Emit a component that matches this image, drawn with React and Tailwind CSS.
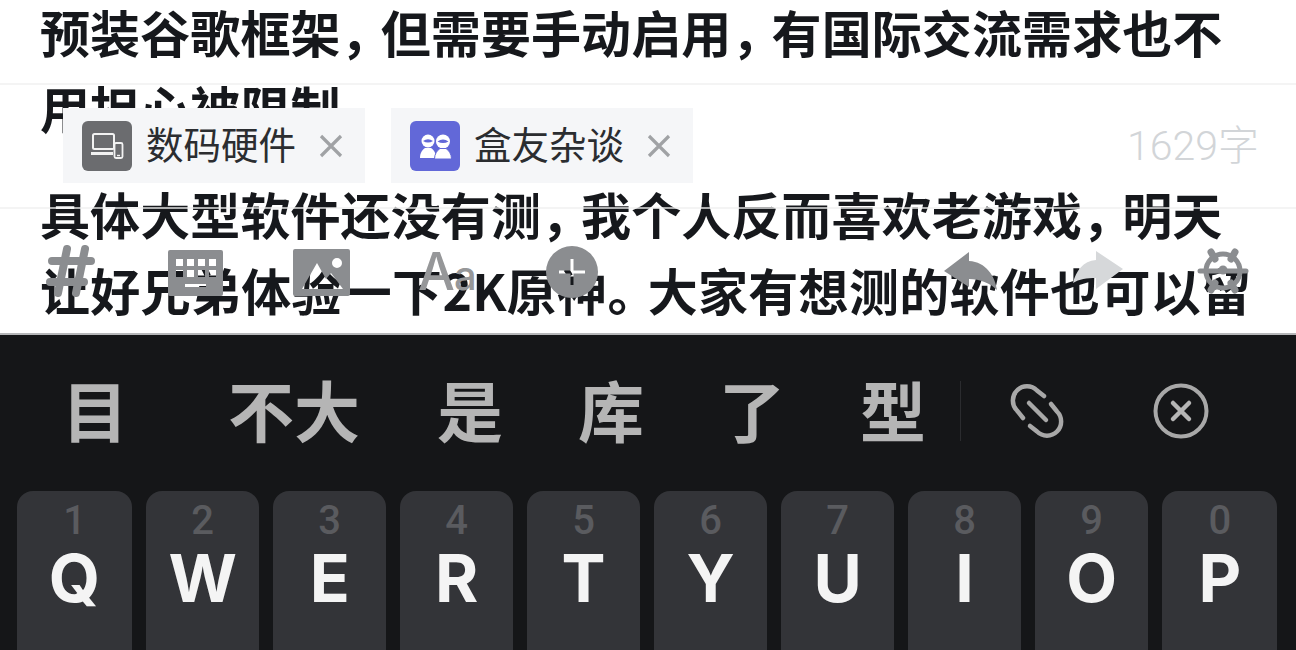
const cjk = { fontFamily: '"Noto Sans CJK SC", sans-serif' };
const latin = { fontFamily: 'Inter, "Noto Sans CJK SC", sans-serif' };
const roboto = { fontFamily: 'Roboto, "Noto Sans CJK SC", sans-serif' };

function Punct({ c, cut }) {
  return <span style={{ marginRight: -cut }}>{c}</span>;
}

function Line({ children, className = 'tracking-[0.1px]' }) {
  return (
    <div className={`h-[76px] leading-[76px] whitespace-nowrap text-[50px] font-bold text-[#16181c] ${className}`}>
      {children}
    </div>
  );
}

function DeviceIcon() {
  return (
    <svg viewBox="0 0 50 50" className="w-[50px] h-[50px]">
      <rect x="11" y="13" width="21" height="15" rx="1.5" fill="none" stroke="#f2f2f2" strokeWidth="2" />
      <path d="M9 31h22v3H9z" fill="#f2f2f2" />
      <rect x="32.5" y="22" width="8" height="15" rx="1.5" fill="#6b6c6f" stroke="#f2f2f2" strokeWidth="1.8" />
      <path d="M35 34.5h3" stroke="#f2f2f2" strokeWidth="1.4" />
    </svg>
  );
}

function FriendsIcon() {
  return (
    <svg viewBox="0 0 50 50" className="w-[50px] h-[50px]">
      <circle cx="18" cy="20" r="6.5" fill="#fff" />
      <path d="M10 37c0-5 2-8 5-10h6c3 2 5 5 5 10z" fill="#fff" />
      <circle cx="33" cy="20.5" r="7" fill="#fff" />
      <path d="M24.5 38c0-5 2.5-8.5 5.5-10.500h6c3 2 5.500 5.500 5.500 10.500z" fill="#fff" stroke="#6268d8" strokeWidth="1" />
      <path d="M13 20q5-3.500 10 0q-5 3-10 0z M27.500 20.500q5.500-3.800 11 0q-5.500 3-11 0z" fill="#6268d8" />
    </svg>
  );
}

function Close() {
  return (
    <svg viewBox="0 0 24 24" className="w-[24px] h-[24px]">
      <path d="M2 2l20 20M22 2L2 22" stroke="#a0a2a5" strokeWidth="3.2" />
    </svg>
  );
}

function Tag({ icon, label, bg }) {
  return (
    <div className="w-[302px] h-[75px] bg-[#f5f6f8] flex items-center pl-[19px]">
      <div className={`w-[50px] h-[50px] rounded-[6px] ${bg}`}>{icon}</div>
      <span className="ml-[14px] -mt-[5px] w-[149px] text-[37.5px] leading-[50px] text-[#2b2d30] whitespace-nowrap">{label}</span>
      <span className="ml-[24px]"><Close /></span>
    </div>
  );
}

const GRAY = '#8b8d90';

function keyboardPath() {
  let d = 'M2 0H53a2 2 0 0 1 2 2V44a2 2 0 0 1-2 2H2a2 2 0 0 1-2-2V2a2 2 0 0 1 2-2z';
  [9, 20].forEach((y) => {
    [8, 19, 30, 41].forEach((x) => {
      d += `M${x} ${y}h7v7h-7z`;
    });
  });
  d += 'M17 34h21v3H17z';
  return d;
}

function Toolbar() {
  return (
    <div className="absolute left-[46px] top-[244px] w-[1210px] h-[54px] flex items-center">
      <svg viewBox="0 0 50 54" className="w-[50px] h-[54px]">
        <path d="M21 5L12 49M39 5L30 49M6 17H45M4 38H38" stroke={GRAY} strokeWidth="8" strokeLinecap="round" fill="none" />
      </svg>
      <svg viewBox="0 0 55 46" className="ml-[72px] mt-[4px] w-[55px] h-[46px]">
        <path fillRule="evenodd" d={keyboardPath()} fill={GRAY} />
      </svg>
      <svg viewBox="0 0 57 47" className="ml-[70px] mt-[2px] w-[57px] h-[47px]">
        <path
          fillRule="evenodd"
          fill={GRAY}
          d="M2 0H55a2 2 0 0 1 2 2V45a2 2 0 0 1-2 2H2a2 2 0 0 1-2-2V2a2 2 0 0 1 2-2z M39 14a5 5 0 1 0 10 0a5 5 0 1 0-10 0z M9 40L24 14L33 30L38 24L50 40z"
        />
      </svg>
      <span className="ml-[68px] mt-[1px] w-[62px] tracking-[-1px] text-[#969799] font-medium leading-none whitespace-nowrap" style={latin}>
        <span className="text-[52px]">A</span><span className="text-[40px]">a</span>
      </span>
      <svg viewBox="0 0 52 52" className="ml-[66px] mt-[2px] w-[52px] h-[52px]">
        <path
          fillRule="evenodd"
          fill={GRAY}
          d="M0 26a26 26 0 1 0 52 0a26 26 0 1 0-52 0z M24.500 13h3v11.500H39v3H27.500V39h-3V27.500H13v-3h11.500z"
        />
      </svg>
      <svg viewBox="0 0 54 38" className="ml-[346px] mt-[-1px] w-[54px] h-[38px]">
        <path d="M25 0V9C42 10 51 24 53 38C46 31 36 27 25 27V35L0 19z" fill={GRAY} />
      </svg>
      <svg viewBox="0 0 50 39" className="ml-[75px] mt-[-1px] w-[50px] h-[39px]">
        <path d="M23 0V9C10 10 3 20 0 32C6 28 14 27 23 27V38L50 18z" fill="#d6d8da" />
      </svg>
      <svg viewBox="0 0 52 46" className="ml-[74px] w-[52px] h-[46px]">
        <g fill="none" stroke={GRAY} strokeLinecap="round">
          <circle cx="26" cy="23" r="17" strokeWidth="5" />
          <path d="M3 23H49" strokeWidth="5" />
          <path d="M14 4l4 7M38 4l-4 7M14 42l4-7M38 42l-4-7" strokeWidth="7" />
        </g>
        <circle cx="26" cy="22" r="4.500" fill={GRAY} />
      </svg>
    </div>
  );
}

function Cand({ children, className = '' }) {
  return <span className={`text-[66px] leading-none font-bold text-[#b5b5b5] whitespace-nowrap ${className}`}>{children}</span>;
}

function Key({ n, l, w = 'w-[112.6px]' }) {
  return (
    <div className={`${w} h-[190px] rounded-[16px] bg-[#333438] flex flex-col items-center shrink-0`} style={latin}>
      <span className="mt-[10px] h-[40px] text-[40px] leading-[40px] font-medium text-[#5a5b5f]" style={roboto}>{n}</span>
      <span className="text-[66px] leading-[74px] font-bold text-[#f4f4f4]">{l}</span>
    </div>
  );
}

export default function App() {
  const keys = [['1','Q','w-[115px]'],['2','W'],['3','E'],['4','R'],['5','T'],['6','Y'],['7','U'],['8','I'],['9','O'],['0','P','w-[115px]']];
  return (
    <div className="relative w-[1296px] h-[650px] overflow-hidden bg-white flex flex-col" style={cjk}>
      <div className="h-[335px] shrink-0 overflow-hidden pl-[40px] border-b-2 border-[#b5b6b8]">
        <div className="-mt-[7px]">
          <Line>预装谷歌框架<Punct c="，" cut={10} />但需要手动启用<Punct c="，" cut={10} />有国际交流需求也不</Line>
          <Line>用担心被限制</Line>
          <Line className="mt-[30px] tracking-[0.1px]">具体大型软件还没有测<Punct c="，" cut={10} />我个人反而喜欢老游戏<Punct c="，" cut={10} />明天</Line>
          <Line className="tracking-[0.3px]">让好兄弟体验一下2K原神<Punct c="。" cut={10} />大家有想测的软件也可以留</Line>
        </div>
      </div>

      <div className="absolute left-0 top-[83px] w-full h-[2px] bg-[#f0f0f0]/70" />
      <div className="absolute left-0 top-[207px] w-full h-[2px] bg-[#f0f0f0]/70" />

      <div className="absolute left-[63px] top-[108px] flex gap-[26px]">
        <Tag icon={<DeviceIcon />} label="数码硬件" bg="bg-[#6b6c6f]" />
        <Tag icon={<FriendsIcon />} label="盒友杂谈" bg="bg-[#6268d8]" />
      </div>
      <span className="absolute left-[1127px] top-[121px] text-[41px] leading-[50px] font-light text-[#d2d5d8] whitespace-nowrap" style={roboto}>1629字</span>

      <Toolbar />

      <div className="flex-1 bg-[#151618] flex flex-col overflow-hidden">
        <div className="h-[156px] -mt-[5px] flex items-center pl-[62px] shrink-0">
          <Cand>目</Cand>
          <Cand className="ml-[100px]">不大</Cand>
          <Cand className="ml-[77px]">是</Cand>
          <Cand className="ml-[75px]">库</Cand>
          <Cand className="ml-[75px]">了</Cand>
          <Cand className="ml-[75px]">型</Cand>
          <div className="ml-[34px] mt-[5px] w-[1px] h-[60px] bg-[#2b2c2f]" />
          <svg viewBox="0 0 56 56" className="ml-[48px] mt-[6px] w-[56px] h-[56px]">
            <g fill="none" stroke="#a8a8a8" strokeWidth="4.500" strokeLinecap="round">
              <path d="M35 13L28 7.500A14 14 0 0 0 8 27.500L14 35" />
              <path d="M21 43L28 48.500A14 14 0 0 0 48 28.500L42 21" />
              <path d="M20 20L37 37" />
            </g>
          </svg>
          <svg viewBox="0 0 56 56" className="ml-[88px] mt-[5px] w-[56px] h-[56px]">
            <circle cx="28" cy="28" r="25.500" fill="none" stroke="#a8a8a8" strokeWidth="4" />
            <path d="M20 20L36 36M36 20L20 36" stroke="#b5b5b5" strokeWidth="4.500" strokeLinecap="round" />
          </svg>
        </div>
        <div className="mt-[5px] flex gap-[14.4px] pl-[17px]">
          {keys.map(([n, l, w]) => <Key key={l} n={n} l={l} w={w} />)}
        </div>
      </div>
    </div>
  );
}
